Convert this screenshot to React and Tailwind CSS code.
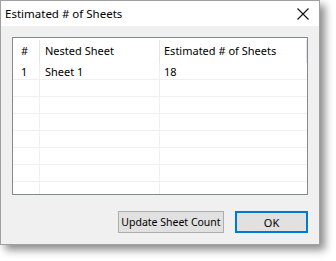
export default function App() {
  const font = { fontFamily: '"Noto Sans", "Open Sans", sans-serif' };
  const rows = [
    ["1", "Sheet 1", "18"],
    ["", "", ""],
    ["", "", ""],
    ["", "", ""],
    ["", "", ""],
    ["", "", ""],
    ["", "", ""],
    ["", "", ""],
  ];
  return (
    <div className="w-[336px] h-[261px] bg-white text-[11px] text-black overflow-hidden whitespace-nowrap" style={font}>
      <div className="w-[320px] h-[245px] flex flex-col border border-[#a0a0a0] shadow-[5px_5px_8px_rgba(0,0,0,0.45)]">
        <div className="h-[25px] bg-white flex items-center justify-between pl-[4px] pr-[8px] shrink-0">
          <span className="leading-none text-[11.5px]">Estimated # of Sheets</span>
          <svg width="14" height="14" viewBox="0 0 14 14" className="mr-[1px]">
            <path d="M1.5 1.5 L12.5 12.5 M12.5 1.5 L1.5 12.5" stroke="#111" strokeWidth="1.1" fill="none" />
          </svg>
        </div>
        <div className="flex-1 bg-[#f0f0f0] flex flex-col pl-[11px] pt-[11px]">
          <div className="w-[296px] h-[158px] border border-[#828790] bg-white overflow-hidden flex flex-col">
            <div className="h-[25px] flex shrink-0 pt-[2px]">
              <div className="w-[27px] border-r border-[#e5e5e5] pl-[8px] flex items-center">#</div>
              <div className="w-[120px] border-r border-[#e5e5e5] pl-[5px] flex items-center">Nested Sheet</div>
              <div className="w-[147px] border-r border-[#e5e5e5] pl-[4px] flex items-center">Estimated # of Sheets</div>
            </div>
            {rows.map((r, i) => (
              <div key={i} className="h-[17px] flex shrink-0 border-b border-[#f0f0f0]">
                <div className="w-[27px] border-r border-[#f0f0f0] pl-[8px] flex items-center leading-none">{r[0]}</div>
                <div className="w-[120px] border-r border-[#f0f0f0] pl-[5px] flex items-center leading-none">{r[1]}</div>
                <div className="w-[147px] pl-[4px] flex items-center leading-none">{r[2]}</div>
              </div>
            ))}
          </div>
          <div className="flex mt-[16px] pl-[106px] gap-[11px]">
            <button className="w-[106px] h-[22px] bg-[#e1e1e1] border border-[#adadad] flex items-center justify-center leading-none text-[10.5px]">Update Sheet Count</button>
            <button className="w-[73px] h-[22px] bg-[#e1e1e1] border-2 border-[#0078d7] flex items-center justify-center leading-none">OK</button>
          </div>
        </div>
      </div>
    </div>
  );
}
